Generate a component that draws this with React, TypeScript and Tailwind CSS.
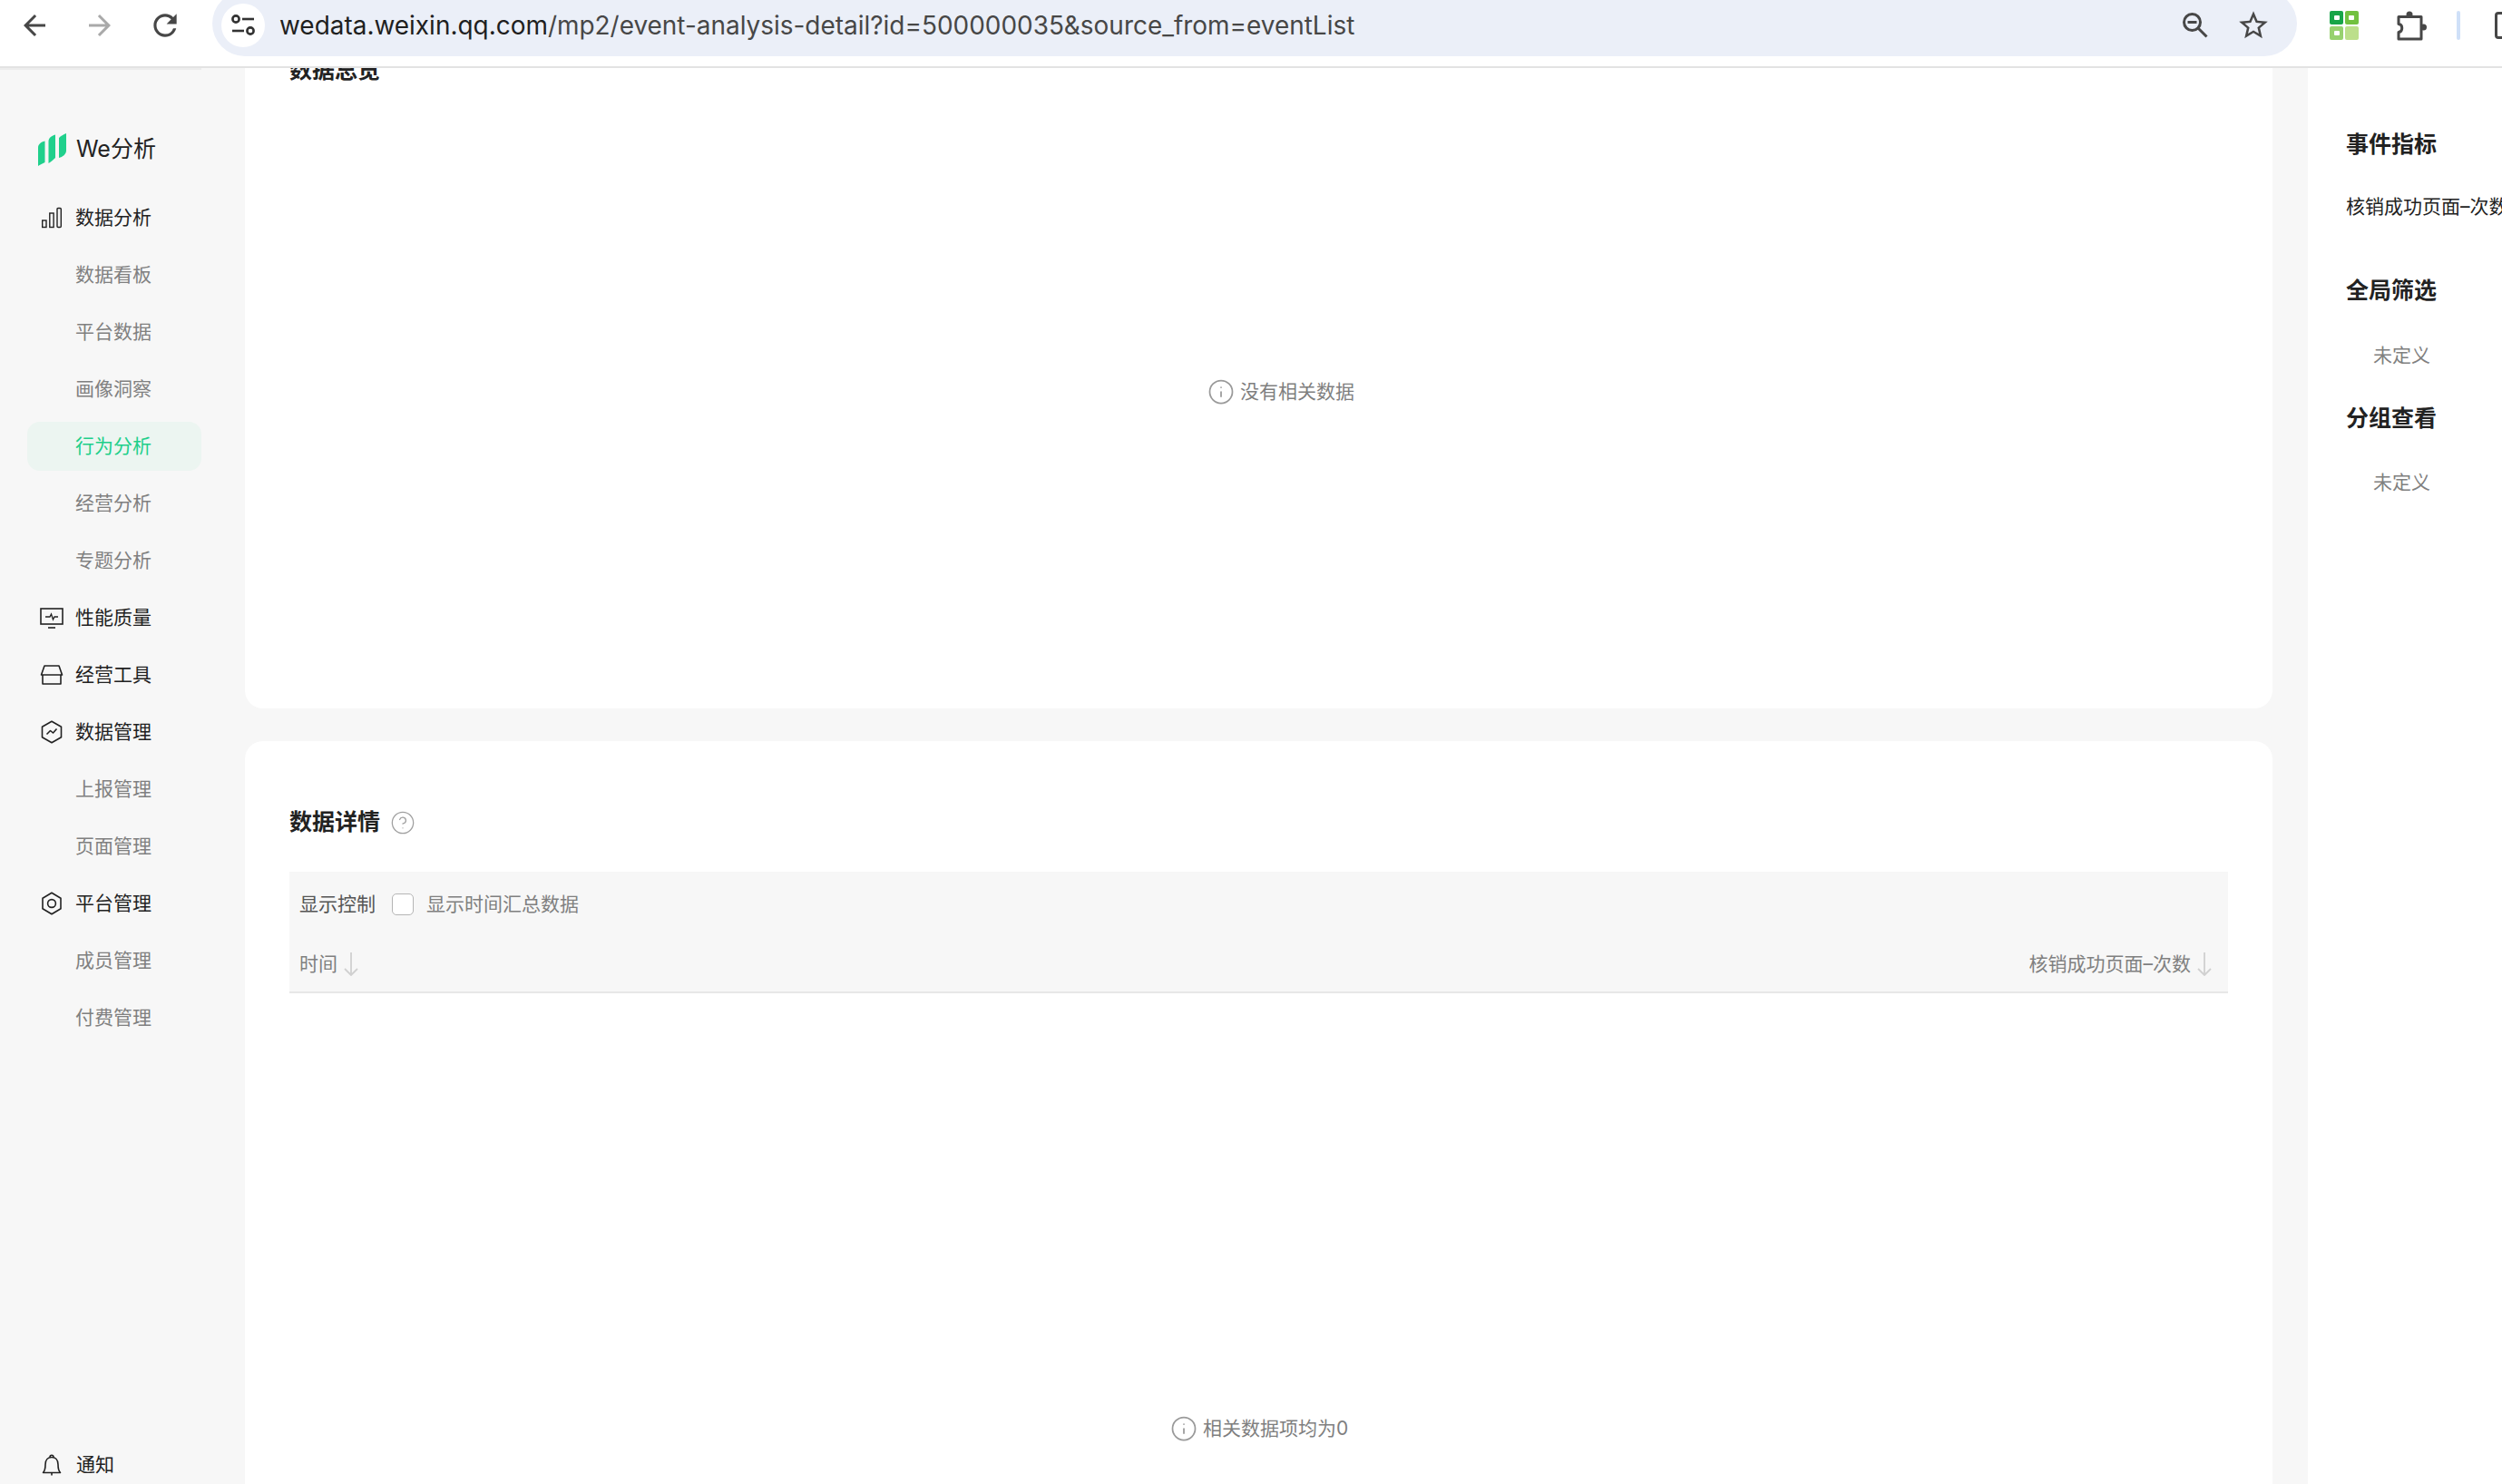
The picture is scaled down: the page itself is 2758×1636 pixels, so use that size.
import { Info, CircleHelp } from "lucide-react";

const font = "font-['Inter','Noto_Sans_CJK_SC',sans-serif]";

const BarsIcon = () => (
  <svg width="24" height="24" viewBox="0 0 24 24" fill="none" stroke="#222" strokeWidth="1.4">
    <rect x="1.700" y="15" width="4.300" height="7.500" />
    <rect x="9.800" y="7" width="4.300" height="15.500" />
    <rect x="18" y="1.500" width="4.300" height="21" rx="1" />
  </svg>
);

const MonitorIcon = () => (
  <svg width="26" height="24" viewBox="0 0 26 24" fill="none" stroke="#222" strokeWidth="1.6">
    <rect x="1" y="2" width="24" height="17" />
    <path d="M9 23h8" />
    <path d="M6 11h5l1.500-3 2 6 1.500-3h4" strokeWidth="1.300" />
  </svg>
);

const StoreIcon = () => (
  <svg width="26" height="22" viewBox="0 0 26 22" fill="none" stroke="#222" strokeWidth="1.600" strokeLinejoin="round">
    <path d="M5 1h16l3.500 10h-23z" />
    <path d="M3 11v10h20V11" />
  </svg>
);

const HexChartIcon = () => (
  <svg width="24" height="26" viewBox="0 0 24 26" fill="none" stroke="#222" strokeWidth="1.600" strokeLinejoin="round">
    <path d="M12 1.200l10.500 6v11.600L12 24.800 1.500 18.800V7.200z" />
    <path d="M6.500 15.500l4-4 3 2.500 4-4.500" />
  </svg>
);

const HexCircleIcon = () => (
  <svg width="24" height="26" viewBox="0 0 24 26" fill="none" stroke="#222" strokeWidth="1.600" strokeLinejoin="round">
    <path d="M12 1.200l10 6v11.600l-10 6-10-6V7.200z" />
    <circle cx="12" cy="13" r="4.400" />
  </svg>
);

const BellIcon = () => (
  <svg width="22" height="26" viewBox="0 0 22 26" fill="none" stroke="#222" strokeWidth="1.600" strokeLinejoin="round">
    <path d="M1.500 21.500c2-2 2.500-3.500 2.500-9C4 7.500 7 4.500 11 4.500s7 3 7 8c0 5.500.5 7 2.500 9z" />
    <path d="M9 4.500c0-3 4-3 4 0" />
    <path d="M11 21.500v3" />
  </svg>
);

const Logo = () => (
  <svg width="31" height="36" viewBox="0 0 31 36" fill="#20d08c">
    <path d="M0 16C0 12 3 9.500 7.500 8.500v23.500C5 33 2 35 0 36z" />
    <path d="M11.500 9c0-4 3-6 7.500-7.500v25.500c-2 2-5 4.500-7.500 6z" />
    <path d="M23 5c2-2 5-4 8-5v19c0 4-4 7-8 8z" />
  </svg>
);

const SortArrow = () => (
  <svg width="16" height="26" viewBox="0 0 16 26" fill="none" stroke="#d0d0d0" strokeWidth="1.800">
    <path d="M8 0v25" />
    <path d="M1 18l7 7 7-7" />
  </svg>
);

type NavItem = { label: string; icon?: React.ReactNode; active?: boolean };

const navItems: NavItem[] = [
  { label: "数据分析", icon: <BarsIcon /> },
  { label: "数据看板" },
  { label: "平台数据" },
  { label: "画像洞察" },
  { label: "行为分析", active: true },
  { label: "经营分析" },
  { label: "专题分析" },
  { label: "性能质量", icon: <MonitorIcon /> },
  { label: "经营工具", icon: <StoreIcon /> },
  { label: "数据管理", icon: <HexChartIcon /> },
  { label: "上报管理" },
  { label: "页面管理" },
  { label: "平台管理", icon: <HexCircleIcon /> },
  { label: "成员管理" },
  { label: "付费管理" },
];

const TopBar = () => (
  <header className="flex h-[75px] shrink-0 items-start overflow-hidden border-b-2 border-[#e3e3e3] bg-white">
    <div className="flex h-[56px] w-[234px] shrink-0 items-center">
      <svg width="36" height="36" viewBox="0 0 24 24" fill="#474747" className="ml-[20px]">
        <path d="M20 11H7.830l5.590-5.590L12 4l-8 8 8 8 1.410-1.410L7.830 13H20v-2z" />
      </svg>
      <svg width="36" height="36" viewBox="0 0 24 24" fill="#a9a9a9" className="ml-[36px]">
        <path d="M4 11h12.170l-5.590-5.590L12 4l8 8-8 8-1.410-1.410L16.170 13H4v-2z" />
      </svg>
      <svg width="38" height="38" viewBox="0 0 24 24" fill="#474747" className="ml-[35px]">
        <path d="M17.650 6.350A7.958 7.958 0 0 0 12 4c-4.420 0-7.990 3.580-7.990 8s3.570 8 7.990 8c3.730 0 6.840-2.550 7.730-6h-2.080A5.990 5.990 0 0 1 12 18c-3.310 0-6-2.690-6-6s2.690-6 6-6c1.660 0 3.140.690 4.220 1.780L13 11h7V4l-2.350 2.350z" />
      </svg>
    </div>
    <div className="-mt-[10px] flex h-[72px] w-[2298px] shrink-0 items-center rounded-full bg-[#ebeff8] pb-[6px] pl-[10px] pr-[29px] pt-[10px]">
      <div className="flex h-[48px] w-[48px] shrink-0 items-center justify-center rounded-full bg-white">
        <svg width="28" height="26" viewBox="0 0 28 26" fill="none" stroke="#333" strokeWidth="2.600">
          <circle cx="6" cy="6" r="3.600" />
          <path d="M13 6h13" />
          <path d="M2 19h13" />
          <circle cx="22" cy="19" r="3.600" />
        </svg>
      </div>
      <p className="ml-[16px] mt-[2px] text-[27.95px] text-[#474747]">
        <span className="text-[#1f1f1f]">wedata.weixin.qq.com</span>
        /mp2/event-analysis-detail?id=500000035&source_from=eventList
      </p>
      <div className="ml-auto flex items-center gap-[31px]">
        <svg width="28" height="28" viewBox="0 0 28 28" fill="none" stroke="#474747" strokeWidth="3">
          <circle cx="10.500" cy="10.500" r="9" />
          <path d="M17 17l9.500 9.500" />
          <path d="M5.500 10.500h10" />
        </svg>
        <svg width="38" height="38" viewBox="0 0 24 24" fill="#474747">
          <path d="M22 9.240l-7.190-.620L12 2 9.190 8.630 2 9.240l5.460 4.730L5.820 21 12 17.270 18.180 21l-1.630-7.030L22 9.240zM12 15.400l-3.760 2.270 1-4.280-3.320-2.880 4.380-.380L12 6.100l1.710 4.040 4.380.380-3.320 2.880 1 4.280L12 15.400z" />
        </svg>
      </div>
    </div>
    <div className="flex h-[56px] flex-1 items-center overflow-hidden pl-[36px]">
      <svg width="32" height="32" viewBox="0 0 32 32" className="shrink-0">
        <rect x="0" y="0" width="15" height="15" rx="2" fill="#17a548" />
        <rect x="17" y="0" width="15" height="15" rx="2" fill="#72c140" />
        <rect x="0" y="17" width="15" height="15" rx="2" fill="#97d16f" />
        <rect x="17" y="17" width="15" height="15" rx="2" fill="#bcdf8b" />
        <rect x="5" y="5" width="6" height="5" rx="1" fill="#fff" />
        <rect x="21" y="5" width="6" height="5" rx="1" fill="#fff" />
        <rect x="5" y="22" width="6" height="5" rx="1" fill="#fff" />
      </svg>
      <svg width="34" height="33" viewBox="0 0 34 33" fill="none" stroke="#474747" strokeWidth="3" strokeLinejoin="round" className="ml-[41px] shrink-0">
        <path d="M3 6.500H28V31H3V23.500C8 23 8 15 3 14.500z" />
        <circle cx="15" cy="4" r="3.500" fill="#474747" stroke="none" />
        <circle cx="30.500" cy="18" r="3.500" fill="#474747" stroke="none" />
      </svg>
      <div className="ml-[33px] h-[32px] w-[4px] shrink-0 rounded-full bg-[#cfe0f8]" />
      <div className="ml-[38px] h-[30px] w-[30px] shrink-0 rounded-[4px] border-[3px] border-[#474747]" />
    </div>
  </header>
);

const Sidebar = () => (
  <aside className="relative flex w-[270px] shrink-0 flex-col bg-[#f7f7f7]">
    <div className="absolute left-0 top-0 h-[2px] w-[222px] bg-[#ececec]" />
    <div className="mb-[23px] ml-[42px] mt-[70px] flex h-[40px] items-center gap-[11px]">
      <Logo />
      <span className="text-[25px] text-[#222]">We分析</span>
    </div>
    {navItems.map((item) => (
      <div key={item.label} className="flex h-[63px] items-center">
        <div
          className={`ml-[30px] flex h-[54px] w-[192px] items-center rounded-[14px] text-[21px] ${
            item.active ? "bg-[#ecf5f1] text-[#20cf8a]" : item.icon ? "text-[#222]" : "text-[#808080]"
          }`}
        >
          <span className="ml-[14px] mr-[13px] flex w-[26px] justify-center">{item.icon}</span>
          {item.label}
        </div>
      </div>
    ))}
    <div className="mt-auto flex h-[42px] items-center pl-[46px] text-[21px] text-[#222]">
      <BellIcon />
      <span className="ml-[16px]">通知</span>
    </div>
  </aside>
);

const EmptyHint = ({ text, className }: { text: string; className: string }) => (
  <div className={`flex items-center gap-[6px] text-[21px] text-[#7f7f7f] ${className}`}>
    <Info size={30} strokeWidth={1.400} className="text-[#9a9a9a]" />
    {text}
  </div>
);

const Overview = () => (
  <section className="flex h-[706px] shrink-0 flex-col rounded-b-[20px] bg-white pl-[49px]">
    <h2 className="-mt-[13px] h-[30px] text-[25px] leading-[30px] font-semibold text-[#222]">数据总览</h2>
    <EmptyHint text="没有相关数据" className="ml-[1012px] mt-[324px]" />
  </section>
);

const Details = () => (
  <section className="mt-[36px] flex flex-1 flex-col rounded-t-[20px] bg-white px-[49px]">
    <div className="mt-[72px] flex h-[36px] items-center">
      <h2 className="text-[25px] font-semibold text-[#222]">数据详情</h2>
      <CircleHelp size={28} strokeWidth={1.100} className="ml-[11px] text-[#a0a0a0]" />
    </div>
    <div className="mt-[36px] h-[134px] border-b-2 border-[#e7e7e7] bg-[#f7f7f7] text-[21px]">
      <div className="flex h-[72px] items-center pl-[11px]">
        <span className="text-[#555]">显示控制</span>
        <span className="ml-[18px] h-[24px] w-[24px] rounded-[5px] border border-[#b5b5b5] bg-white" />
        <span className="ml-[14px] text-[#808080]">显示时间汇总数据</span>
      </div>
      <div className="flex h-[60px] items-center justify-between pl-[11px] pr-[18px] text-[#808080]">
        <span className="flex items-center gap-[7px]">
          时间
          <SortArrow />
        </span>
        <span className="flex items-center gap-[7px]">
          核销成功页面–次数
          <SortArrow />
        </span>
      </div>
    </div>
    <EmptyHint text="相关数据项均为0" className="ml-[971px] mt-[464px]" />
  </section>
);

const RightPanel = () => (
  <aside className="w-[214px] shrink-0 overflow-hidden bg-white pl-[42px] pt-[69px] whitespace-nowrap">
    <h3 className="h-[30px] text-[25px] leading-[30px] font-semibold text-[#222]">事件指标</h3>
    <p className="mt-[39px] h-[30px] text-[21px] leading-[30px] text-[#222]">核销成功页面–次数</p>
    <h3 className="mt-[62px] h-[30px] text-[25px] leading-[30px] font-semibold text-[#222]">全局筛选</h3>
    <p className="ml-[30px] mt-[42px] h-[30px] text-[21px] leading-[30px] text-[#808080]">未定义</p>
    <h3 className="mt-[39px] h-[30px] text-[25px] leading-[30px] font-semibold text-[#222]">分组查看</h3>
    <p className="ml-[30px] mt-[41px] h-[30px] text-[21px] leading-[30px] text-[#808080]">未定义</p>
  </aside>
);

export default function App() {
  return (
    <div className={`flex h-[1636px] w-[2758px] flex-col overflow-hidden bg-[#f7f7f7] ${font}`}>
      <TopBar />
      <div className="flex min-h-0 flex-1">
        <Sidebar />
        <main className="flex w-[2235px] shrink-0 flex-col overflow-hidden">
          <Overview />
          <Details />
        </main>
        <div className="w-[39px] shrink-0" />
        <RightPanel />
      </div>
    </div>
  );
}
